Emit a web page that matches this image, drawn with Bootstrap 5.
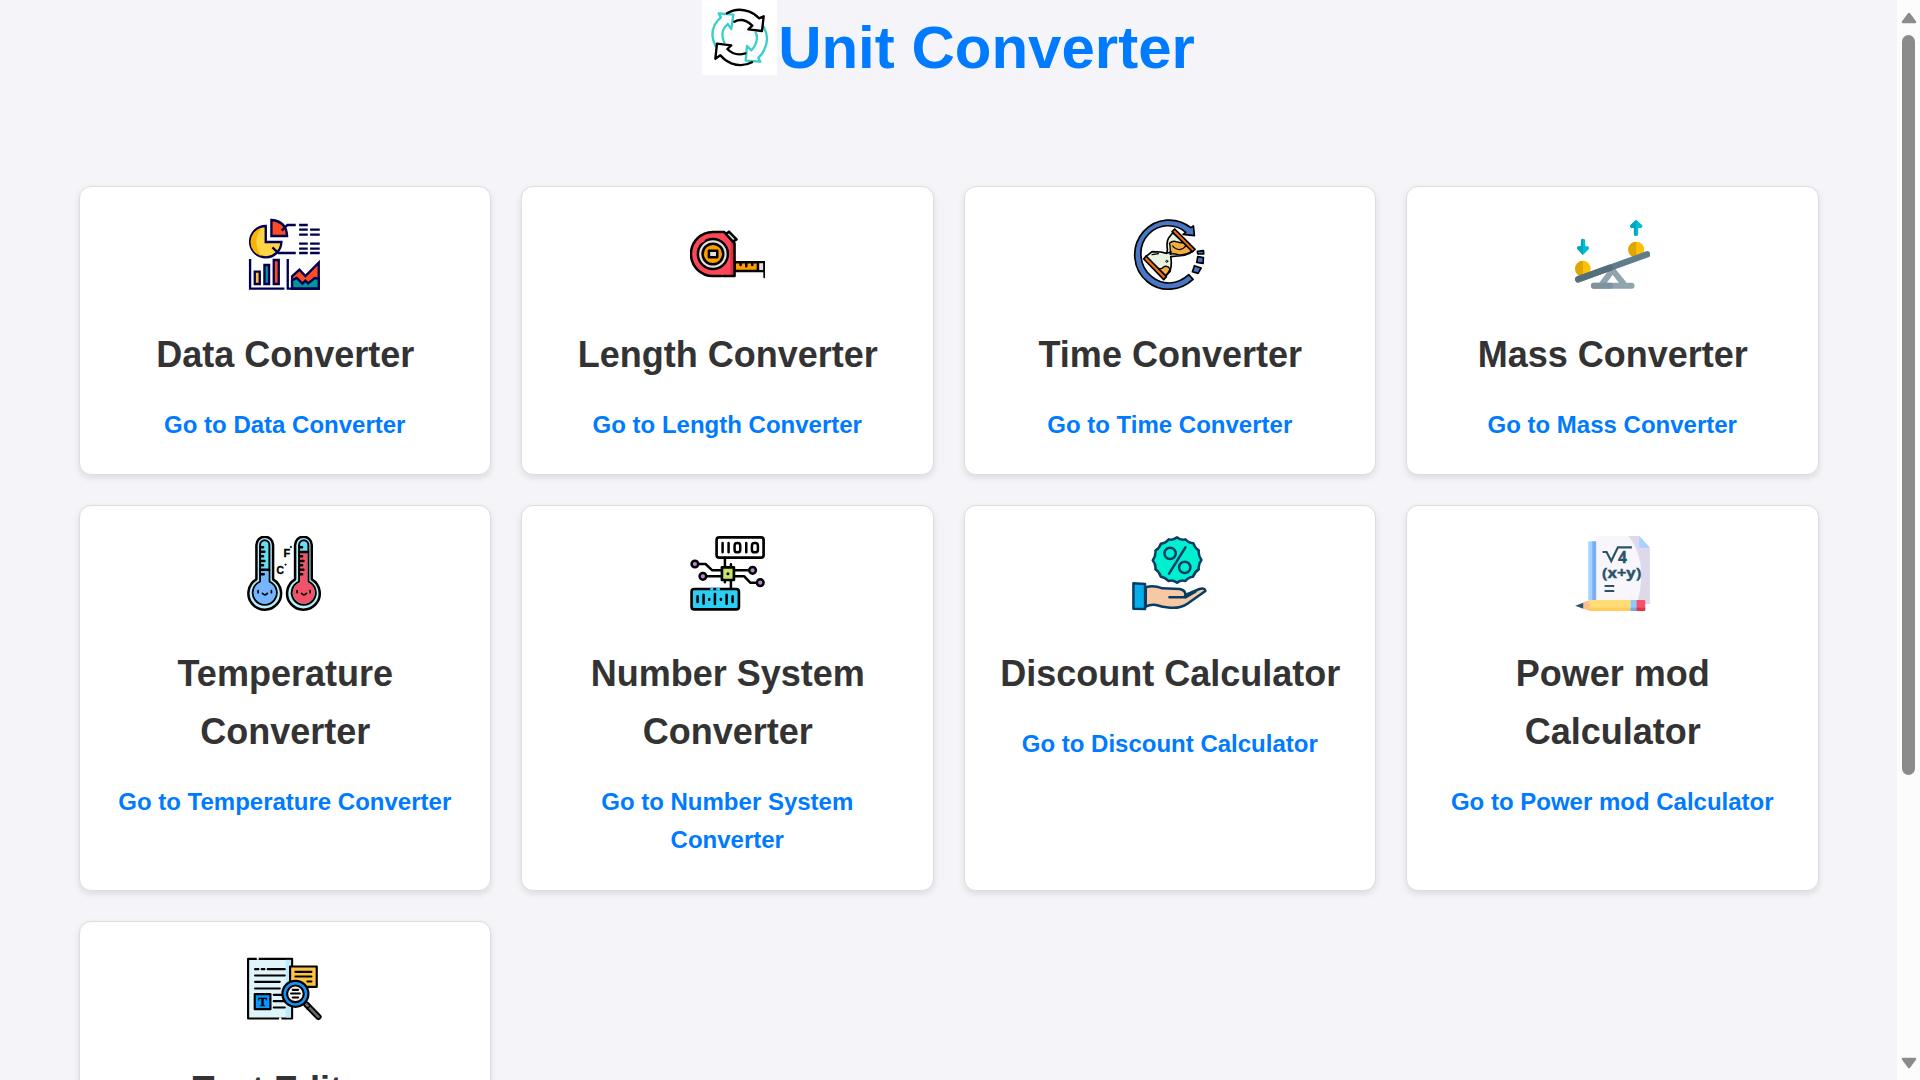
<!DOCTYPE html>
<html lang="en">
<head>
<meta charset="utf-8">
<meta name="viewport" content="width=device-width, initial-scale=1">
<title>Unit Converter</title>
<link href="https://cdn.jsdelivr.net/npm/bootstrap@5.3.0/dist/css/bootstrap.min.css" rel="stylesheet">
<style>
  body { background: #f4f4f9; color: #333; font-family: Arial, "Liberation Sans", sans-serif; line-height: 1.6; height: 1080px; }
  .page-header { height: 186px; }
  .page-title { color: #007bff; font-size: 60px; font-weight: 700; line-height: 95px; padding-left: 1px; }
  .logo { width: 75px; height: 75px; background: #fff; }
  .tools { width: 1770px; --bs-gutter-x: 30px; --bs-gutter-y: 30px; }
  .tool { border: 1px solid #ddd; border-radius: 12px; padding: 30px 30px 29.5px; box-shadow: 0 3px 7.5px rgba(0,0,0,.1); }
  .tool-tall { min-height: 386px; }
  .tool svg { width: 75px; height: 75px; margin-bottom: 34px; }
  .tool h2 { color: #333; font-size: 36px; font-weight: 700; line-height: 57.6px; margin-bottom: 22.5px; padding-left: 1px; }
  .tool a { color: #007bff; font-size: 24px; font-weight: 700; line-height: 38.4px; text-decoration: none; }
  svg { display: block; flex: none; }
  .ln { fill: none; stroke-linecap: round; stroke-linejoin: round; }
  .rj { stroke-linecap: round; stroke-linejoin: round; }
  .scroll-rail { width: 23px; background: #fcfcfc; padding: 12px 0 11px; }
  .scroll-thumb { width: 13px; height: 740px; margin-top: 11px; background: #8b8b8b; border-radius: 7px; }
</style>
</head>
<body class="d-flex overflow-hidden">
<main class="flex-grow-1 overflow-hidden">
  <header class="page-header d-flex justify-content-center align-items-start">
    <svg class="logo" viewBox="39 0 225 225">
      <g class="ln" stroke-width="7">
        <path stroke="#36cfcb" d="M80 139Q62 103 77 75Q84 62 96 52L89 40L133 44L127 87L116 72Q96 91 101 112Q102 120 106 127"/>
        <path stroke="#36cfcb" d="M224 80Q243 114 226 148Q220 163 208 173L214 185L170 182L174 138L187 151Q202 137 204 114Q204 105 200 98"/>
        <path stroke="#000" d="M114 40Q143 22 179 34Q197 40 210 55L224 49L219 93L178 88L190 77Q163 51 136 65"/>
        <path stroke="#000" d="M189 187Q160 202 127 190Q107 182 94 166L79 176L84 131L127 136L115 147Q137 170 169 160"/>
      </g>
    </svg>
    <h1 class="page-title mb-0">Unit Converter</h1>
  </header>

  <div class="row row-cols-4 tools mx-auto">
    <div class="col"><div class="card tool h-100 text-center align-items-center">
      <!-- pie, bar and area charts -->
      <svg viewBox="21.75 21 225 225">
        <g stroke="#000051" stroke-width="7">
          <path fill="#ffd445" d="M78 48A47 47 0 1 0 125 96H78Z"/>
          <path fill="#ffb100" stroke="none" d="M66 54A43 43 0 0 0 66 138Q50 122 50 96Q50 70 66 54Z"/>
          <path fill="#ff4b20" d="M95 30V78H142Q140 34 95 30Z"/>
          <path fill="none" d="M126 62L143 45H168M98 112L116 129H168M178 45H204M178 59H204M211 59H240M178 74H204M211 74H240M178 101H204M211 101H240M178 116H204M211 116H240M178 129H204M211 129H240"/>
          <path fill="#ffc233" d="M45 185H60V222H45Z"/>
          <path fill="#00969b" d="M74 165H88V222H74Z"/>
          <path fill="#ff4b20" d="M102 150H117V222H102Z"/>
          <path fill="none" d="M31 147V236H134"/>
          <path fill="#ff4b20" d="M157 236V199L179 179L197 198L237 158V236Z"/>
          <path fill="#00969b" d="M157 236V211L171 204L188 221L197 212L205 220L225 204L237 206V236Z"/>
          <path fill="none" d="M144 147V236H240"/>
        </g>
      </svg>
      <h2>Data Converter</h2><a href="#">Go to Data Converter</a>
    </div></div>

    <div class="col"><div class="card tool h-100 text-center align-items-center">
      <!-- tape measure -->
      <svg viewBox="29.25 21 225 225">
        <g class="rj" stroke="#000" stroke-width="7.500">
          <path fill="#ff9d00" d="M163 157H253V183H163Z"/>
          <path fill="#e6e0df" stroke="none" d="M235 160H249V180H235Z"/>
          <path fill="none" d="M233 158V182M253 157V201M181 158V165M198 158V169M216 158V165"/>
          <path fill="#ff4658" stroke="none" d="M98 66H132L163 100V198H98A66 66 0 0 1 98 66Z"/>
          <path fill="#db3046" stroke="none" d="M151 88L163 100V198H151Z"/>
          <path fill="none" d="M124 198H98A66 66 0 0 1 98 66H132L163 100V198H130"/>
          <path fill="#e6e0df" d="M137 72L146 65L169 88L158 95Z"/>
          <circle cx="98" cy="132" r="45" fill="#e6e0df"/>
          <path fill="none" stroke="#ff4658" stroke-width="9" d="M62 94L69 91"/>
          <circle cx="98" cy="132" r="31" fill="#ff9d00"/>
          <rect x="86" y="122" width="25" height="20" fill="#e6e0df"/>
        </g>
      </svg>
      <h2>Length Converter</h2><a href="#">Go to Length Converter</a>
    </div></div>

    <div class="col"><div class="card tool h-100 text-center align-items-center">
      <!-- hourglass in a circular arrow -->
      <svg viewBox="21.75 21 225 225">
        <g class="rj" stroke="#000" stroke-width="5">
          <path fill="#4777c5" d="M206 48L209 77L175 73L183 67C150 38 101 42 72 72C36 109 43 169 80 199C114 227 157 226 192 194L205 208C167 243 109 249 69 216C22 178 17 110 56 65C94 23 155 19 198 53Z"/>
          <path fill="#4777c5" d="M209 167L229 174L220 190L203 185ZM219 140L236 143L235 160L216 157ZM218 124L236 122L237 132L219 132Z"/>
          <path fill="#e7f2df" d="M144 68L132 83Q124 97 128 118L126 130L108 126L82 125L63 140L121 200L136 184Q142 165 138 140L158 138Q184 139 205 123Z"/>
          <path fill="#f3ad3c" stroke-width="4" d="M134 100Q144 91 154 95Q170 100 182 98L204 121Q184 137 160 134Q143 129 136 133Q138 112 134 100Z"/>
          <path fill="#f3ad3c" stroke-width="4" d="M98 174Q111 179 115 172Q127 164 136 177Q132 188 122 197Z"/>
          <path fill="none" stroke-width="4" d="M144 108Q150 117 165 119Q178 116 185 105M82 134L101 131M128 129L140 126"/>
          <circle cx="126" cy="154" r="3" fill="#e7f2df" stroke-width="3"/>
          <path fill="#f26d0c" d="M150 57L211 118L203 125L142 65Z"/>
          <path fill="#f26d0c" d="M64 138L125 200L117 209L57 147Z"/>
        </g>
      </svg>
      <h2>Time Converter</h2><a href="#">Go to Time Converter</a>
    </div></div>

    <div class="col"><div class="card tool h-100 text-center align-items-center">
      <!-- seesaw balance -->
      <svg viewBox="29.25 21 225 225">
        <circle cx="53" cy="176" r="23.500" fill="#ffc107"/><path fill="#dfa500" d="M53 152.500A23.500 23.500 0 0 0 53 199.500Z"/>
        <circle cx="213" cy="119" r="24" fill="#ffc107"/><path fill="#dfa500" d="M213 95A24 24 0 0 0 213 143Z"/>
        <path class="ln" stroke="#90a4ae" stroke-width="18" d="M112 220L142 180L174 220M86 227H199"/>
        <path class="ln" stroke="#7f939e" stroke-width="18" d="M86 227H134"/>
        <path class="ln" stroke="#607d8b" stroke-width="19" d="M39 208L246 133"/>
        <path class="ln" stroke="#546e7a" stroke-width="19" d="M39 208L134 173"/>
        <g fill="#00bcd4"><path d="M47 93Q47 86 53 86Q60 86 60 93V109H68Q73 111 71 117L53 135L36 117Q33 111 39 109H47Z"/><path d="M206 71Q206 78 212.500 78Q219 78 219 71V54H228Q233 51 231 46L213 29L195 46Q192 51 198 54H206Z"/></g>
        <path fill="#00a6bd" d="M53 86Q47 86 47 93V109H39Q33 111 36 117L53 135ZM213 29L195 46Q192 51 198 54H206V71Q206 78 213 78Z"/>
      </svg>
      <h2>Mass Converter</h2><a href="#">Go to Mass Converter</a>
    </div></div>

    <div class="col"><div class="card tool tool-tall h-100 text-center align-items-center">
      <!-- thermometers -->
      <svg viewBox="21.750 18 225 225">
        <g class="rj" stroke="#000" stroke-width="7.500">
          <path fill="#b9edfa" d="M50 148V45A25 25 0 0 1 100 45V148A49 49 0 1 1 50 148Z"/>
          <path fill="#68dcf3" stroke-width="6" d="M61 155V45A14 14 0 0 1 89 45V155A36 36 0 1 1 61 155Z"/>
          <path fill="#75b5ff" stroke="none" d="M64 120H86V157A33 33 0 1 1 64 157Z"/>
          <path fill="none" d="M61 119H88M63 52H70M63 65H74M63 79H70M63 93H74M63 106H70M63 133H72"/>
          <path fill="none" stroke-width="5" d="M55 182V188M95 182V188M68 190Q75 199 83 190"/>
          <path fill="#b9edfa" d="M166 148V45A25 25 0 0 1 216 45V148A49 49 0 1 1 166 148Z"/>
          <path fill="#68dcf3" stroke-width="6" d="M178 155V45A14 14 0 0 1 206 45V155A36 36 0 1 1 178 155Z"/>
          <path fill="#ef5369" stroke="none" d="M181 67H203V157A33 33 0 1 1 181 157Z"/>
          <path fill="none" d="M178 66H205M180 52H187M180 79H187M180 93H191M180 106H187M180 119H191M180 133H187"/>
          <path fill="none" stroke-width="5" d="M172 182V188M211 182V188M185 190Q192 199 200 190"/>
          <circle cx="153" cy="51" r="1.500" fill="#000" stroke-width="3"/><circle cx="137" cy="104" r="1.500" fill="#000" stroke-width="3"/>
        </g>
        <g font-family="Liberation Sans,sans-serif" font-weight="700" fill="#000" stroke="#000" font-size="33"><text x="131" y="80">F</text><text x="110" y="132" font-size="31">C</text></g>
      </svg>
      <h2>Temperature Converter</h2><a href="#">Go to Temperature Converter</a>
    </div></div>

    <div class="col"><div class="card tool tool-tall h-100 text-center align-items-center">
      <!-- binary blocks joined by a chip -->
      <svg viewBox="29.250 18 225 225">
        <g class="rj" stroke="#000" stroke-width="7.500" fill="none">
          <rect x="109" y="22" width="141" height="61" rx="8" fill="#fff" stroke-width="8"/>
          <path d="M127 39V67M145 39V67M198 39V67"/><rect x="163" y="39" width="17" height="28" rx="8"/><rect x="215" y="39" width="18" height="28" rx="8"/>
          <path d="M134 83V112M152 103V112M134 150V157M152 150V178M56 102H76L96 121H123M80 139H123M162 121H204M162 139H192L210 158H229"/>
          <rect x="125" y="112" width="36" height="38" fill="#c8e36b" stroke-width="8"/><circle cx="143" cy="131" r="2" fill="#000" stroke-width="5"/>
          <g fill="#bd83d7"><circle cx="44" cy="102" r="10"/><circle cx="68" cy="139" r="10"/><circle cx="217" cy="121" r="10"/><circle cx="240" cy="158" r="10"/></g>
          <rect x="34" y="177" width="142" height="61" rx="8" fill="#2bcef5" stroke-width="8"/>
          <path stroke="#2bcef5" stroke-width="9" stroke-linecap="butt" d="M90 177H99M108 177H119"/>
          <path d="M104 177H104M52 199V216M70 194V221M87 207V209M104 192V222M122 207V209M139 194V221M157 199V216"/>
        </g>
      </svg>
      <h2>Number System Converter</h2><a href="#">Go to Number System Converter</a>
    </div></div>

    <div class="col"><div class="card tool tool-tall h-100 text-center align-items-center">
      <!-- hand holding a percent badge -->
      <svg viewBox="21.750 18 225 225">
        <g class="rj" stroke="#073c65" stroke-width="7.500">
          <path fill="#00f0cf" d="M157 22Q168 32 182 28Q191 39 206 40Q210 54 222 61Q220 75 230 90Q220 103 222 118Q209 126 205 140Q191 141 182 153Q168 149 157 158Q144 149 131 153Q122 142 108 140Q104 126 92 118Q94 104 84 91Q94 76 92 62Q105 54 108 41Q123 40 132 28Q145 32 157 22Z"/>
          <g fill="none"><circle cx="136" cy="70" r="17"/><circle cx="180" cy="112" r="17"/><path d="M182 52L133 131"/></g>
          <path fill="#f6c8a3" d="M63 172Q85 164 113 175L165 177Q183 181 182 195L224 177Q242 173 242 183L190 220Q165 236 137 233Q112 231 94 225Q78 222 63 230Z"/>
          <path fill="none" d="M134 202H177Q184 199 182 192M182 202L212 185"/>
          <path fill="#08aeea" d="M26 160L61 162V237L26 236Z"/>
        </g>
      </svg>
      <h2>Discount Calculator</h2><a href="#">Go to Discount Calculator</a>
    </div></div>

    <div class="col"><div class="card tool tool-tall h-100 text-center align-items-center">
      <!-- formula sheet and pencil -->
      <svg viewBox="29.250 18 225 225">
        <path fill="#a5d2ff" d="M69 34H94V210H69Z"/><path fill="#7bacf7" d="M81 34H94V210H81Z"/>
        <path fill="#ddd9eb" d="M150 18H222L254 53V222H150Z"/>
        <path fill="#f8f6fb" d="M93 18H190Q228 66 228 130Q228 180 217 212H93Z"/>
        <path fill="#a5d2ff" d="M222 18L254 53H222Z"/>
        <g fill="none" stroke="#28536a" stroke-width="6.500"><path d="M112 66H124L138 93L158 52H200M118 168H147M118 183H147"/></g>
        <g fill="#28536a" stroke="#28536a" font-family="Open Sans,sans-serif" font-weight="700"><text x="158" y="99" font-size="46" textLength="27" lengthAdjust="spacingAndGlyphs">4</text><text x="110" y="143" font-size="43" textLength="118" lengthAdjust="spacingAndGlyphs">(x+y)</text></g>
        <path fill="#fdbe87" d="M54 217L76 210V243L54 236Z"/>
        <path fill="#ffdc75" d="M76 210H196V243H76L69 235L76 226L69 218Z"/><path fill="#ffcc5b" d="M76 233H196V243H76L69 236Z"/>
        <path fill="#8fcaff" d="M196 210H215V243H196Z"/><path fill="#78abed" d="M196 233H215V243H196Z"/>
        <path fill="#f6536b" d="M214 210H236Q240 210 240 214V239Q240 243 236 243H214Z"/><path fill="#dc354e" d="M214 233H240V239Q240 243 236 243H214Z"/>
        <path fill="#28536a" d="M30 227L54 218V236Z"/>
      </svg>
      <h2>Power mod Calculator</h2><a href="#">Go to Power mod Calculator</a>
    </div></div>

    <div class="col"><div class="card tool h-100 text-center align-items-center">
      <!-- text page, note and magnifier -->
      <svg viewBox="531.750 127.500 225 225">
        <g class="rj" stroke="#000" stroke-width="6.500">
          <path fill="#def5fc" d="M535 148H667V327H535Z"/>
          <path fill="#bdeafd" stroke="none" d="M648 151H664V324H648Z"/>
          <path fill="none" stroke="#fff" stroke-width="8" stroke-linecap="butt" d="M561 147H567M628 328H635"/>
          <path fill="none" d="M556 179H566M576 179H584M594 179H645M556 198H645M556 217H630M556 237H630M612 256H645M612 275H645M612 294H645"/>
          <path fill="#0896ff" d="M555 254H602V299H555Z"/>
          <path fill="#ffc344" d="M661 171H741V232H661Z"/>
          <path fill="none" d="M677 187H725M677 201H725M713 216H725"/>
          <path fill="none" stroke-width="19" d="M710 285L746 322"/>
          <path fill="none" stroke="#696969" stroke-width="8" d="M709 284L746 322"/>
          <path fill="none" stroke-width="4" d="M712 298L722 289"/>
          <circle cx="677" cy="253" r="39" fill="#1595fb"/>
          <circle cx="677" cy="253" r="25" fill="#fff5f5"/>
          <path fill="none" d="M669 241H685M664 252H690M669 264H685"/>
        </g>
        <text x="578.500" y="290" text-anchor="middle" font-family="Liberation Serif,serif" font-weight="700" font-size="39" stroke="#000" stroke-width="1">T</text>
      </svg>
      <h2>Text Editor</h2><a href="#">Go to Text Editor</a>
    </div></div>
  </div>
</main>
<aside class="scroll-rail d-flex flex-column align-items-center flex-shrink-0" aria-hidden="true">
  <svg width="16" height="12"><path d="M8 2L14 10H2Z" fill="#8b8b8b" stroke="#8b8b8b" stroke-width="2.500" stroke-linejoin="round"/></svg>
  <div class="scroll-thumb"></div>
  <svg class="mt-auto" width="16" height="12"><path d="M8 10L14 2H2Z" fill="#8b8b8b" stroke="#8b8b8b" stroke-width="2.500" stroke-linejoin="round"/></svg>
</aside>
<script src="https://cdn.jsdelivr.net/npm/bootstrap@5.3.0/dist/js/bootstrap.bundle.min.js"></script>
</body>
</html>
